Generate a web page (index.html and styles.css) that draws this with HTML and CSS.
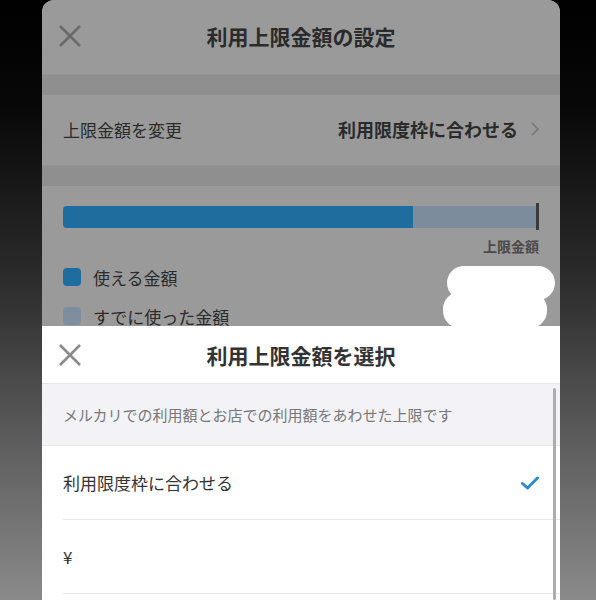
FILE: index.html
```html
<!DOCTYPE html>
<html lang="ja">
<head>
    <meta charset="UTF-8">
    <meta name="viewport" content="width=device-width, initial-scale=1.0">
    <title>利用上限金額の設定</title>
    <link rel="stylesheet" href="styles.css">
</head>
<body>
    <div class="screen">
        <div class="page">
            <header class="head">
                <svg class="close" viewBox="0 0 24 24" width="24" height="24">
                    <path d="M2 2 L22 22 M22 2 L2 22" />
                </svg>
                <h1>利用上限金額の設定</h1>
            </header>
            <div class="gap"></div>
            <div class="row">
                <span>上限金額を変更</span>
                <span class="row-value">
                    利用限度枠に合わせる
                    <svg class="chevron" viewBox="0 0 8 14" width="8" height="14">
                        <path d="M1 1 L7 7 L1 13" />
                    </svg>
                </span>
            </div>
            <div class="gap"></div>
            <section class="usage">
                <div class="meter">
                    <div class="track">
                        <div class="fill" style="width: 74%;"></div>
                    </div>
                    <div class="tick"></div>
                </div>
                <div class="meter-label">上限金額</div>
                <ul class="legend">
                    <li><i class="swatch"></i>使える金額</li>
                    <li><i class="swatch swatch-used"></i>すでに使った金額<span class="amount">5</span></li>
                </ul>
            </section>
            <div class="blot blot-top"></div>
            <div class="blot blot-bottom"></div>
        </div>

        <div class="sheet">
            <header class="sheet-head">
                <svg class="close" viewBox="0 0 24 24" width="24" height="24">
                    <path d="M2 2 L22 22 M22 2 L2 22" />
                </svg>
                <h2>利用上限金額を選択</h2>
            </header>
            <p class="note">メルカリでの利用額とお店での利用額をあわせた上限です</p>
            <ul class="options">
                <li>
                    <span>利用限度枠に合わせる</span>
                    <svg class="check" viewBox="0 0 18 14" width="18" height="14">
                        <path d="M1.5 7.5 L6.5 12 L16.5 2" />
                    </svg>
                </li>
                <li><span>¥</span></li>
            </ul>
            <div class="scrollbar"></div>
        </div>
    </div>
</body>
</html>
```

FILE: styles.css
```css
body {
    margin: 0;
    height: 600px;
    overflow: hidden;
    font-family: "Noto Sans CJK JP", "Noto Sans", sans-serif;
    background: linear-gradient(to bottom, #000 0%, #080808 18%, #2e2e2e 48%, #5a5a5a 72%, #8a8a8a 100%);
}
.screen {
    position: relative;
    width: 518px;
    height: 600px;
    margin-left: 42px;
    border-radius: 12px 12px 0 0;
    overflow: hidden;
    background: #999;
    display: flex;
    flex-direction: column;
}

/* dimmed page underneath */
.page {
    position: relative;
    height: 326px;
    flex-shrink: 0;
    overflow: hidden;
    background: #9a9a9a;
    color: #2a2a2a;
}
.head {
    position: relative;
    height: 72px;
    padding-bottom: 2px;
    display: flex;
    align-items: center;
    justify-content: center;
}
.close {
    position: absolute;
    left: 16px;
    top: 50%;
    margin-top: -13px;
    fill: none;
    stroke: #6a6a6a;
    stroke-width: 2.6;
}
.head h1 {
    margin: 0;
    font-size: 21px;
    font-weight: bold;
    color: #2b2b2b;
}
.gap {
    height: 20px;
    background: #8f8f8f;
    border-top: 1px solid #939393;
}
.row {
    height: 68px;
    padding: 0 21px 2px;
    display: flex;
    align-items: center;
    justify-content: space-between;
    font-size: 17px;
}
.row-value {
    display: flex;
    align-items: center;
    gap: 13px;
    font-size: 18px;
    font-weight: bold;
}
.chevron {
    fill: none;
    stroke: #7a7a7a;
    stroke-width: 1.6;
}
.usage {
    padding: 17px 21px 0;
}
.meter {
    display: flex;
    align-items: center;
    height: 27px;
}
.track {
    flex: 1;
    height: 22px;
    background: #7c8c9c;
    border-radius: 4px 0 0 4px;
    overflow: hidden;
}
.fill {
    height: 100%;
    background: #1f6d9f;
}
.tick {
    width: 3px;
    height: 27px;
    background: #3a3a3a;
}
.meter-label {
    margin-top: 6px;
    text-align: right;
    font-size: 14px;
    font-weight: bold;
    line-height: 20px;
    color: #4a4a4a;
}
.legend {
    list-style: none;
    margin: 7px 0 0;
    padding: 0;
    display: flex;
    flex-direction: column;
    gap: 11px;
}
.legend li {
    display: flex;
    align-items: center;
    gap: 12px;
    height: 28px;
    font-size: 17px;
}
.swatch {
    width: 18px;
    height: 18px;
    border-radius: 4px;
    background: #1f6d9f;
}
.swatch-used {
    background: #7e8e9e;
}
.amount {
    margin-left: auto;
    font-size: 17px;
}
.blot {
    position: absolute;
    background: #fff;
    border-radius: 17px;
}
.blot-top {
    left: 405px;
    top: 266px;
    width: 108px;
    height: 34px;
}
.blot-bottom {
    left: 401px;
    top: 292px;
    width: 104px;
    height: 36px;
}

/* bottom sheet */
.sheet {
    position: relative;
    flex: 1;
    background: #fff;
    color: #333;
}
.sheet-head {
    position: relative;
    height: 57px;
    display: flex;
    align-items: center;
    justify-content: center;
    border-bottom: 1px solid #e4e4e8;
}
.sheet-head .close {
    margin-top: -12px;
    stroke: #8a8a8a;
}
.sheet-head h2 {
    margin: 0;
    font-size: 21px;
    font-weight: bold;
    color: #333;
}
.note {
    margin: 0;
    height: 61px;
    padding: 0 21px;
    display: flex;
    align-items: center;
    background: #f2f2f7;
    border-bottom: 1px solid #e6e6ea;
    font-size: 15px;
    color: #777;
}
.options {
    list-style: none;
    margin: 0;
    padding: 0 0 0 21px;
}
.options li {
    height: 73px;
    padding-right: 21px;
    display: flex;
    align-items: center;
    justify-content: space-between;
    border-bottom: 1px solid #e6e6e6;
    font-size: 17px;
}
.check {
    fill: none;
    stroke: #2b8ad0;
    stroke-width: 3;
    stroke-linecap: round;
    stroke-linejoin: round;
}
.scrollbar {
    position: absolute;
    right: 4px;
    top: 62px;
    bottom: 0;
    width: 3px;
    border-radius: 2px;
    background: #adadad;
}
```
